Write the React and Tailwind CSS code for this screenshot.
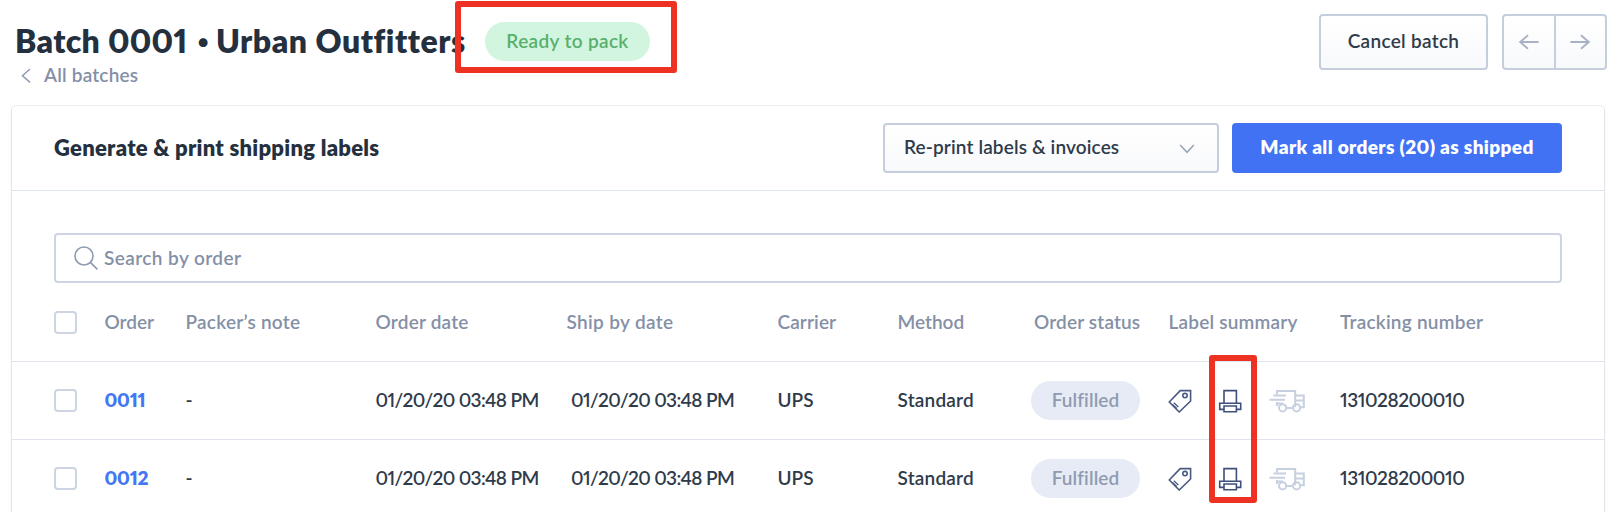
const TagIcon = () => (
  <svg className="h-[24px] w-[24px]" viewBox="0 0 24 24" fill="none" stroke="#4a5a82" strokeWidth="1.6">
    <path d="M12.2 1.6H22.6V12L11.2 23L1.3 13Z" />
    <circle cx="17" cy="6.6" r="2.2" />
    <path d="M4.4 15.4L8.8 19.4M5.8 13.8L10.4 18" strokeWidth="1.3" />
  </svg>
);

const PrinterIcon = () => (
  <svg className="h-[24px] w-[24px]" viewBox="0 0 24 24" fill="none" stroke="#3f4f7a" strokeWidth="1.6">
    <path d="M6 14V1.6H18.4V14" />
    <path d="M6 20.4H1.7V14.2H22.7V20.4H18.4" />
    <path d="M6 17H18.4V22.8H6Z" />
  </svg>
);

const TruckIcon = () => (
  <svg className="h-[24px] w-[36px]" viewBox="0 0 36 24" fill="none" stroke="#c6d0e1" strokeWidth="2">
    <path d="M8 5.5V2H26.2V18.3M17.4 19H23M8 13V17M26.4 6.5H34.8V18.3H31.4M26.4 11.5H34.8" />
    <path d="M4.5 6.6H17M0.5 10.8H16M8.5 14.6H14" />
    <circle cx="13.6" cy="18.8" r="3.6" />
    <circle cx="27.6" cy="18.8" r="3.6" />
  </svg>
);

const Checkbox = () => (
  <span className="block h-[23px] w-[23px] rounded-[4px] border-2 border-[#cdd4e2] bg-white" />
);

const columns =
  "grid h-full grid-cols-[50.5px_81px_190px_191px_211px_120px_136.5px_134.5px_171.5px_1fr] items-center pl-[42px]";

const rows = [{ order: "0011" }, { order: "0012" }];

function OrderRow({ order }) {
  return (
    <div className="h-[78px] shrink-0 border-t border-[#dfe4ee] text-[#2f3b4a]">
      <div className={columns}>
        <Checkbox />
        <a className="pb-[2px] font-extrabold tracking-[-0.2px] text-[#4377f5]">{order}</a>
        <span className="pb-[2px]">-</span>
        <span className="pb-[2px] tracking-[-0.65px]">01/20/20 03:48 PM</span>
        <span className="pb-[2px] pl-[4.5px] tracking-[-0.65px]">01/20/20 03:48 PM</span>
        <span className="pb-[2px]">UPS</span>
        <span className="pb-[2px] tracking-[0.2px]">Standard</span>
        <span className="-ml-[3px] flex h-[39px] w-[109px] items-center justify-center rounded-full bg-[#e7ebf5] pb-[2px] tracking-[0.1px] text-[#8f9bb1]">
          Fulfilled
        </span>
        <div className="-ml-px flex items-center">
          <TagIcon />
          <span className="ml-[26px]">
            <PrinterIcon />
          </span>
          <span className="ml-[27px]">
            <TruckIcon />
          </span>
        </div>
        <span className="pb-[2px] tracking-[-0.45px]">131028200010</span>
      </div>
    </div>
  );
}

export default function App() {
  return (
    <div className="relative flex h-[512px] w-[1618px] flex-col overflow-hidden bg-white font-['Lato',sans-serif] text-[19px] leading-[24px] font-semibold whitespace-nowrap [font-feature-settings:'pnum']">
      <header className="flex h-[105px] shrink-0 justify-between pt-[14px] pr-[11px] pl-[15px]">
        <div>
          <div className="flex h-[55px] items-center">
            <h1 className="flex items-center pb-[2px] text-[32px] leading-[40px] font-extrabold text-[#25303f]">
              <span className="w-[182px] tracking-[0.35px]">Batch 0001</span>
              <span className="w-[19px] font-['Inter',sans-serif] text-[28px]">•</span>
              <span className="w-[269px] tracking-[0.55px]">Urban Outfitters</span>
            </h1>
            <span className="flex h-[39px] w-[165px] items-center justify-center rounded-full bg-[#d2f5e0] pb-[2px] tracking-[0.35px] text-[#57b06c]">
              Ready to pack
            </span>
          </div>
          <a className="-mt-[6px] flex items-center pl-[6px] tracking-[0.2px] text-[#8490a6]">
            <svg className="mr-[13px] h-[16px] w-[10px]" viewBox="0 0 10 16" fill="none" stroke="#8f9bb0" strokeWidth="1.5">
              <path d="M9 2L1.5 8.7L9 15.4" />
            </svg>
            All batches
          </a>
        </div>
        <div className="flex gap-[14px]">
          <button className="h-[56px] w-[169px] rounded-[4px] border-2 border-[#c5cedd] bg-linear-to-b from-white to-[#f8f9fb] pb-[2px] tracking-[0.3px] text-[#2f3b4a]">
            Cancel batch
          </button>
          <div className="flex h-[56px] w-[105px] rounded-[4px] border-2 border-[#c5cedd] bg-linear-to-b from-white to-[#f8f9fb]">
            <button className="flex flex-1 items-center justify-center border-r-2 border-[#c5cedd]">
              <svg className="h-[16px] w-[20px]" viewBox="0 0 20 16" fill="none" stroke="#a9b2c2" strokeWidth="1.9">
                <path d="M19.6 8H1.2M9 1.2L1.2 8L9 14.8" />
              </svg>
            </button>
            <button className="flex flex-1 items-center justify-center">
              <svg className="h-[16px] w-[20px]" viewBox="0 0 20 16" fill="none" stroke="#a9b2c2" strokeWidth="1.9">
                <path d="M0.4 8H18.8M11 1.2L18.8 8L11 14.8" />
              </svg>
            </button>
          </div>
        </div>
      </header>

      <main className="mr-[13px] ml-[11px] flex h-[430px] shrink-0 flex-col rounded-[5px] border border-b-0 border-t-[#eaecef] border-r-[#e2e5e9] border-l-[#e2e5e9] shadow-xs">
        <div className="flex h-[85px] shrink-0 items-center border-b border-[#dfe5ee] px-[42px]">
          <h2 className="flex-1 text-[22px] tracking-[0.27px] font-extrabold text-[#25303f]">
            Generate &amp; print shipping labels
          </h2>
          <button className="flex h-[50px] w-[336px] items-center justify-between rounded-[4px] border-2 border-[#c5cedd] bg-linear-to-b from-white to-[#f8f9fb] pr-[22px] pb-[2px] pl-[19px] tracking-[0.13px] text-[#2f3b4a]">
            Re-print labels &amp; invoices
            <svg className="mt-[4px] h-[10px] w-[16px]" viewBox="0 0 16 10" fill="none" stroke="#9aa6b8" strokeWidth="1.6">
              <path d="M1.2 1L8 8.4L14.8 1" />
            </svg>
          </button>
          <button className="ml-[13px] h-[50px] w-[330px] rounded-[4px] bg-[#4072f3] pb-[2px] font-extrabold tracking-[0.35px] text-white">
            Mark all orders (20) as shipped
          </button>
        </div>

        <div className="mx-[42px] mt-[42px] flex h-[50px] shrink-0 items-center rounded-[4px] border-2 border-[#cdd4e2] pl-[18px] tracking-[0.42px] text-[#8490a6]">
          <svg className="mr-[6px] h-[24px] w-[24px]" viewBox="0 0 24 24" fill="none" stroke="#8f9bb0" strokeWidth="1.6">
            <circle cx="10" cy="10" r="9" />
            <path d="M16.4 16.4L23.4 23.4" />
          </svg>
          Search by order
        </div>

        <div className="h-[78px] shrink-0 text-[#8490a6]">
          <div className={columns}>
            <Checkbox />
            <span>Order</span>
            <span className="tracking-[0.25px]">Packer’s note</span>
            <span className="tracking-[0.2px]">Order date</span>
            <span className="tracking-[0.35px]">Ship by date</span>
            <span className="tracking-[0.1px]">Carrier</span>
            <span>Method</span>
            <span className="tracking-[0.15px]">Order status</span>
            <span className="tracking-[0.2px]">Label summary</span>
            <span className="tracking-[0.23px]">Tracking number</span>
          </div>
        </div>
        {rows.map((r) => (
          <OrderRow key={r.order} {...r} />
        ))}
      </main>

      <div className="absolute top-[1px] left-[455px] h-[72px] w-[222px] rounded-[3px] border-6 border-[#ed3223]" />
      <div className="absolute top-[355px] left-[1209px] h-[148px] w-[48px] rounded-[3px] border-6 border-[#ed3223]" />
    </div>
  );
}
